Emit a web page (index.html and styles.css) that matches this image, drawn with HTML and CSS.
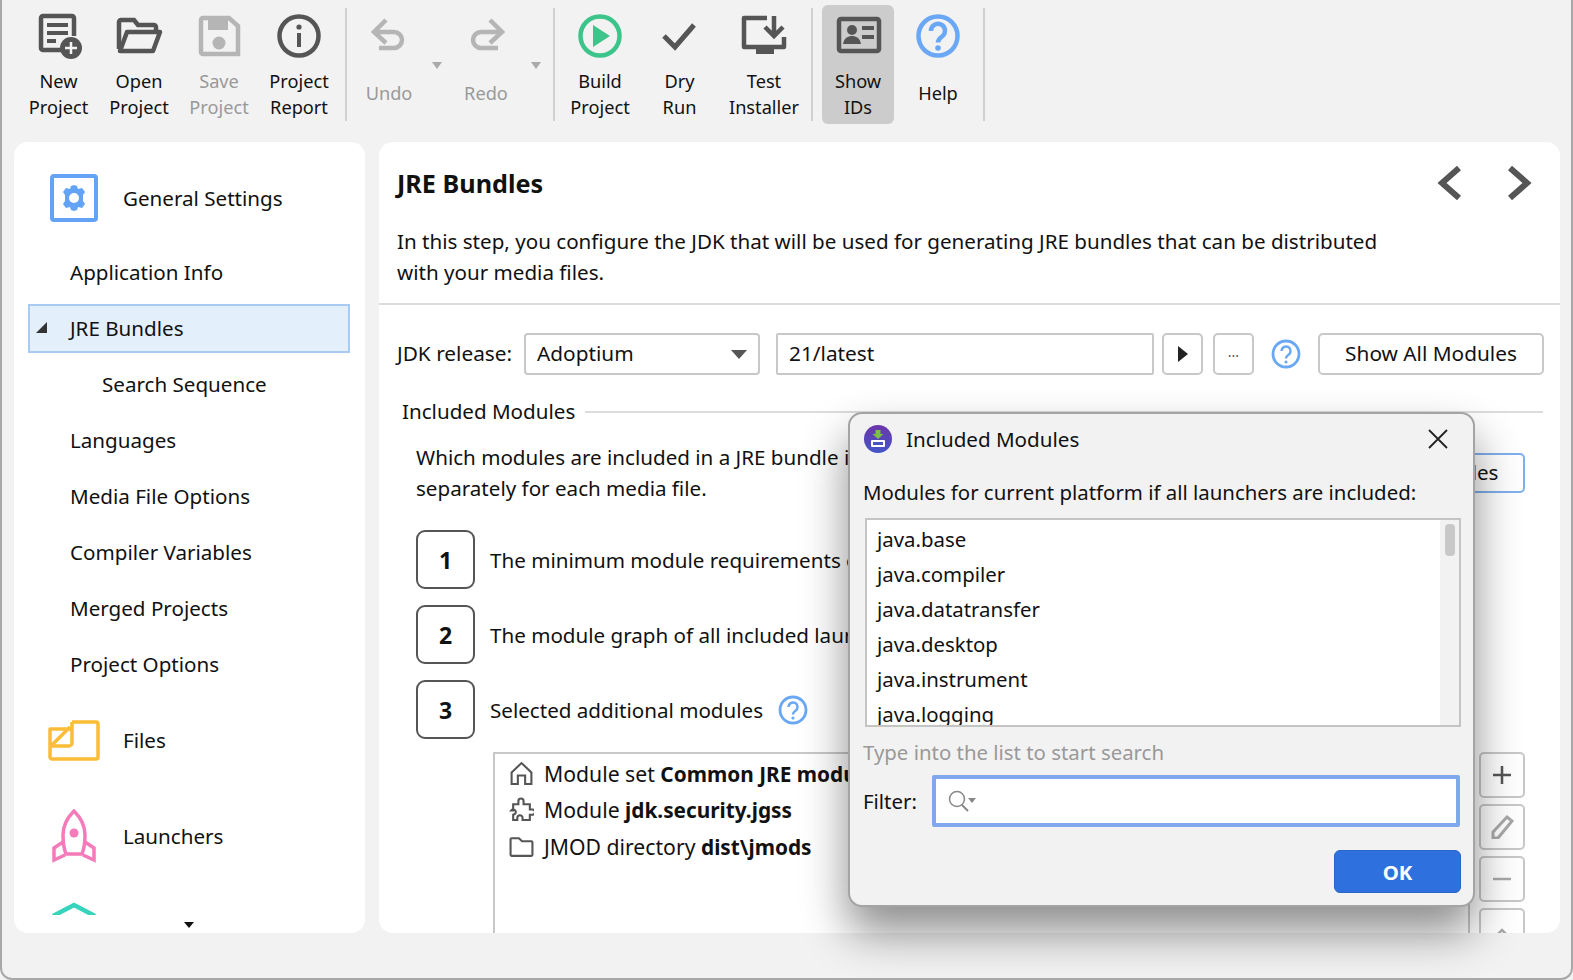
FILE: index.html
```html
<!DOCTYPE html>
<html lang="en">
<head>
<meta charset="utf-8">
<title>JRE Bundles</title>
<link rel="stylesheet" href="styles.css">
</head>
<body>
<div class="window">
  <header class="toolbar">
    <div class="tool w81"><svg class="ico" viewBox="0 0 48 48"><path d="M26 38H8a2 2 0 0 1-2-2V6a2 2 0 0 1 2-2h29a2 2 0 0 1 2 2v18" fill="none" stroke="#555" stroke-width="4.500"/><path d="M12 11h21v4H12zM12 19h21v4H12zM12 27h9v4h-9z" fill="#555"/><circle cx="36" cy="36" r="11" fill="#555"/><path d="M36 30v12M30 36h12" stroke="#f2f2f2" stroke-width="2.500"/></svg><div class="lbl">New<br>Project</div></div>
    <div class="tool w80"><svg class="ico" viewBox="0 0 48 48"><path d="M4 37V10a2 2 0 0 1 2-2h13l4 5h16a2 2 0 0 1 2 2v4" fill="none" stroke="#555" stroke-width="4.500"/><path d="M12 20h33l-7 19H5z" fill="none" stroke="#555" stroke-width="4.500" stroke-linejoin="round"/></svg><div class="lbl">Open<br>Project</div></div>
    <div class="tool w80 off"><svg class="ico" viewBox="0 0 48 48"><path d="M8 6h26l9 8v28H8a2 2 0 0 1-2-2V8a2 2 0 0 1 2-2z" fill="none" stroke="#b5b5b5" stroke-width="4.500"/><path d="M13 8h20v10H13z" fill="#b5b5b5"/><circle cx="24" cy="31" r="6.500" fill="#b5b5b5"/></svg><div class="lbl">Save<br>Project</div></div>
    <div class="tool w80"><svg class="ico" viewBox="0 0 48 48"><circle cx="24" cy="24" r="19.500" fill="none" stroke="#555" stroke-width="4.500"/><path d="M22 21h4v14h-4z" fill="#555"/><circle cx="24" cy="15" r="2.600" fill="#555"/></svg><div class="lbl">Project<br>Report</div></div>
    <div class="sep s-a"></div>
    <div class="tool w82 off"><svg class="ico" viewBox="0 0 48 48"><path d="M11 20h18a8 8 0 0 1 0 16H14" fill="none" stroke="#b5b5b5" stroke-width="4.500"/><path d="M21 8 9 20l12 11" fill="none" stroke="#b5b5b5" stroke-width="4.500"/></svg><div class="lbl lbl-one">Undo</div></div>
    <div class="drop drop-a"></div>
    <div class="tool w84 off"><svg class="ico" viewBox="0 0 48 48"><path d="M39 20H19a8 8 0 0 0 0 16h17" fill="none" stroke="#b5b5b5" stroke-width="4.500"/><path d="M28 8l12 12-12 11" fill="none" stroke="#b5b5b5" stroke-width="4.500"/></svg><div class="lbl lbl-one">Redo</div></div>
    <div class="drop drop-b"></div>
    <div class="sep s-b"></div>
    <div class="tool w80"><svg class="ico" viewBox="0 0 48 48"><circle cx="24" cy="24" r="19.500" fill="none" stroke="#3cc48a" stroke-width="4.500"/><path d="M17 13l17 11-17 11z" fill="#3cc48a"/></svg><div class="lbl">Build<br>Project</div></div>
    <div class="tool w79"><svg class="ico" viewBox="0 0 48 48"><path d="M8 24l11 11L38 13" fill="none" stroke="#555" stroke-width="5"/></svg><div class="lbl">Dry<br>Run</div></div>
    <div class="tool w90"><svg class="ico" viewBox="0 0 48 48"><path d="M27 6H4v29h40V25" fill="none" stroke="#555" stroke-width="4.500" stroke-linejoin="round"/><path d="M16 36h18v6H16z" fill="#555"/><path d="M34 4v20M25 15l9 9 9-9" fill="none" stroke="#555" stroke-width="4.500"/></svg><div class="lbl">Test<br>Installer</div></div>
    <div class="sep s-c"></div>
    <div class="tool w72 active"><svg class="ico" viewBox="0 0 48 48"><rect x="5" y="7" width="40" height="32" rx="2" fill="none" stroke="#555" stroke-width="4.500"/><circle cx="18" cy="18" r="5" fill="#555"/><path d="M9 32c1-6 5-8 9-8s8 2 9 8z" fill="#555"/><path d="M28 14h12v4H28zM28 23h12v4H28z" fill="#555"/></svg><div class="lbl">Show<br>IDs</div></div>
    <div class="tool w88"><svg class="ico" viewBox="0 0 48 48"><circle cx="24" cy="24" r="19.500" fill="none" stroke="#6aa8f5" stroke-width="4.500"/><path d="M17 19a7 7 0 1 1 11 5.500c-2.500 1.800-4 3-4 6" fill="none" stroke="#6aa8f5" stroke-width="4.500"/><circle cx="24" cy="36" r="2.800" fill="#6aa8f5"/></svg><div class="lbl lbl-one">Help</div></div>
    <div class="sep s-d"></div>
  </header>

  <div class="content">
    <aside class="sidebar">
      <nav class="side-nav">
        <div class="head head-first"><svg class="sec-ico" viewBox="0 0 48 48"><rect x="2" y="2" width="44" height="44" rx="2" fill="none" stroke="#62a3f5" stroke-width="4"/><path d="M24 11l3 1 1 3 4-1 3 4-2 3v6l2 3-3 4-4-1-1 3-3 1-3-1-1-3-4 1-3-4 2-3v-6l-2-3 3-4 4 1 1-3z" fill="#62a3f5"/><circle cx="24" cy="24" r="5" fill="#fff"/></svg><span>General Settings</span></div>
        <div class="row">Application Info</div>
        <div class="row selected"><div class="sel-box"><span class="expander"></span>JRE Bundles</div></div>
        <div class="row sub">Search Sequence</div>
        <div class="row">Languages</div>
        <div class="row">Media File Options</div>
        <div class="row">Compiler Variables</div>
        <div class="row">Merged Projects</div>
        <div class="row">Project Options</div>
        <div class="head head-files"><svg class="sec-ico files-ico" viewBox="0 0 52 41"><path d="M24 2h24a2 2 0 0 1 2 2v33a2 2 0 0 1-2 2H4a2 2 0 0 1-2-2V9h22M24 2v21a3 3 0 0 1-3 3H2M3 26 22 7" fill="none" stroke="#fbbd35" stroke-width="3.500" stroke-linejoin="round"/></svg><span>Files</span></div>
        <div class="head head-next"><svg class="sec-ico rocket-ico" viewBox="0 0 48 54"><path d="M24 2c8 8 11 16 11 24 0 7-1 14-3 19H16c-2-5-3-12-3-19 0-8 3-16 11-24z" fill="none" stroke="#f47ab9" stroke-width="3.500"/><circle cx="24" cy="24" r="4.500" fill="#f47ab9"/><path d="M13 33 4 39v12l11-5M35 33l9 6v12l-11-5" fill="none" stroke="#f47ab9" stroke-width="3.500"/></svg><span>Launchers</span></div>
        <div class="head head-last"><svg class="sec-ico" viewBox="0 0 48 48"><path d="M3 15 24 4l21 11" fill="none" stroke="#36d3bd" stroke-width="4.500"/></svg></div>
      </nav>
      <div class="side-more"><span class="more-arrow"></span></div>
    </aside>

    <main class="panel">
      <div class="panel-head">
        <div class="title-row">
          <h1 class="title">JRE Bundles</h1>
          <div class="nav-arrows">
            <svg class="nav-ico" viewBox="0 0 28 36"><path d="M23 3 6 18l17 15" fill="none" stroke="#555" stroke-width="6"/></svg>
            <svg class="nav-ico" viewBox="0 0 28 36"><path d="M6 3l17 15L6 33" fill="none" stroke="#555" stroke-width="6"/></svg>
          </div>
        </div>
        <p class="desc">In this step, you configure the JDK that will be used for generating JRE bundles that can be distributed with your media files.</p>
      </div>
      <div class="panel-body">
        <div class="jdk-row">
          <span class="jdk-label">JDK release:</span>
          <div class="combo"><span>Adoptium</span><span class="combo-arrow"></span></div>
          <div class="field">21/latest</div>
          <div class="sq sq-play"><span class="play"></span></div>
          <div class="sq sq-dots">...</div>
          <svg class="help" viewBox="0 0 30 30"><circle cx="15" cy="15" r="13" fill="none" stroke="#6aa8f5" stroke-width="2.800"/><path d="M10.500 12a4.500 4.500 0 1 1 7 3.700c-1.500 1-2.500 1.800-2.500 3.800" fill="none" stroke="#6aa8f5" stroke-width="2.500"/><circle cx="15" cy="23" r="1.600" fill="#6aa8f5"/></svg>
          <div class="btn btn-all">Show All Modules</div>
        </div>
        <div class="legend"><span>Included Modules</span><i class="legend-line"></i></div>
        <div class="group">
          <div class="intro">
            <p class="intro-text">Which modules are included in a JRE bundle is determined separately for each media file.</p>
            <div class="btn btn-inc">Show Included Modules</div>
          </div>
          <div class="step"><div class="num">1</div><span>The minimum module requirements of the JRE</span></div>
          <div class="step"><div class="num">2</div><span>The module graph of all included launchers</span></div>
          <div class="step"><div class="num">3</div><span>Selected additional modules</span><svg class="help help-step" viewBox="0 0 30 30"><circle cx="15" cy="15" r="13" fill="none" stroke="#6aa8f5" stroke-width="2.800"/><path d="M10.500 12a4.500 4.500 0 1 1 7 3.700c-1.500 1-2.500 1.800-2.500 3.800" fill="none" stroke="#6aa8f5" stroke-width="2.500"/><circle cx="15" cy="23" r="1.600" fill="#6aa8f5"/></svg></div>
          <div class="mods">
            <div class="mod-list">
              <div class="mod"><svg class="mod-ico" viewBox="0 0 24 24"><path d="M2.500 11 12 2l9.500 9v11h-6v-8h-7v8h-6z" fill="none" stroke="#555" stroke-width="2"/></svg><span>Module set <b>Common JRE modules</b></span></div>
              <div class="mod"><svg class="mod-ico" viewBox="0 0 24 24"><path d="M4 7h5V4a2.500 2.500 0 0 1 5 0v3h6v5h2.500a2.500 2.500 0 0 1 0 5H20v5h-7v-2a2.500 2.500 0 0 0-5 0v2H4v-5l2-1a2 2 0 0 0-4-3h2z" fill="none" stroke="#555" stroke-width="2"/></svg><span>Module <b>jdk.security.jgss</b></span></div>
              <div class="mod"><svg class="mod-ico" viewBox="0 0 24 24"><path d="M1.500 20V5a1 1 0 0 1 1-1h7l3 3h9a1 1 0 0 1 1 1v12a1 1 0 0 1-1 1h-19a1 1 0 0 1-1-1z" fill="none" stroke="#555" stroke-width="2"/></svg><span>JMOD directory <b>dist\jmods</b></span></div>
            </div>
            <div class="mod-btns">
              <div class="side-btn"><svg class="side-ico" viewBox="0 0 24 24"><path d="M12 3v18M3 12h18" stroke="#555" stroke-width="2.500"/></svg></div>
              <div class="side-btn"><svg class="side-ico" viewBox="0 0 24 24"><path d="M3 23v-6L17 2l5 4L8 23z" fill="none" stroke="#a9a9a9" stroke-width="3"/></svg></div>
              <div class="side-btn"><svg class="side-ico" viewBox="0 0 24 24"><path d="M3 12h18" stroke="#a9a9a9" stroke-width="2.500"/></svg></div>
              <div class="side-btn"><svg class="side-ico" viewBox="0 0 24 24"><path d="M7 16l5-5 5 5" fill="none" stroke="#a9a9a9" stroke-width="2.500"/></svg></div>
            </div>
          </div>
        </div>
      </div>
    </main>
  </div>

  <section class="dialog">
    <div class="dlg-title">
      <svg class="dlg-logo" viewBox="0 0 28 28"><defs><linearGradient id="lg" x1="0" y1="0" x2="0" y2="1"><stop offset="0" stop-color="#6d35a8"/><stop offset="1" stop-color="#4256c9"/></linearGradient></defs><circle cx="14" cy="14" r="14" fill="url(#lg)"/><path d="M11.500 5h5v4h3l-5.500 5-5.500-5h3z" fill="#7ac143"/><rect x="7" y="15" width="14" height="7" rx="1" fill="#fff"/><rect x="9" y="17" width="10" height="3" fill="#4a53c0"/></svg>
      <span class="dlg-name">Included Modules</span>
      <svg class="dlg-close" viewBox="0 0 20 20"><path d="M1 1l18 18M19 1 1 19" stroke="#222" stroke-width="1.800"/></svg>
    </div>
    <div class="dlg-label">Modules for current platform if all launchers are included:</div>
    <div class="dlg-list">
      <div class="dlg-items">
        <div class="dlg-item">java.base</div>
        <div class="dlg-item">java.compiler</div>
        <div class="dlg-item">java.datatransfer</div>
        <div class="dlg-item">java.desktop</div>
        <div class="dlg-item">java.instrument</div>
        <div class="dlg-item">java.logging</div>
      </div>
      <div class="scroll"><div class="thumb"></div></div>
    </div>
    <div class="dlg-hint">Type into the list to start search</div>
    <div class="filter-row">
      <span class="filter-label">Filter:</span>
      <div class="filter-input"><svg class="search" viewBox="0 0 30 26"><circle cx="10" cy="11" r="7.500" fill="none" stroke="#888" stroke-width="1.500"/><path d="M15 17l6 6" stroke="#888" stroke-width="2"/><path d="M21 10h8l-4 5z" fill="#888"/></svg></div>
    </div>
    <div class="dlg-foot"><div class="ok">OK</div></div>
  </section>
</div>
</body>
</html>
```
FILE: styles.css
```css
* { box-sizing: border-box; }
html, body { margin: 0; height: 100%; overflow: hidden; }
body { background: #f2f2f2; font-family: "Noto Sans", "Open Sans", sans-serif; color: #111; font-size: 20.600px; }
p, h1 { margin: 0; }

.window { position: relative; height: 980px; width: 1573px; background: #f2f2f2; border: 2px solid #a8a8a8; border-top: 0; border-radius: 0 0 12px 12px; overflow: hidden; }

.toolbar { display: flex; height: 142px; padding: 5px 0 0 16px; align-items: flex-start; }
.tool { display: flex; flex-direction: column; align-items: center; height: 119px; padding-top: 7px; border-radius: 6px; font-size: 18.200px; }
.ico { width: 48px; height: 48px; flex: none; }
.lbl { height: 52px; margin-top: 8px; display: flex; flex-direction: column; justify-content: center; text-align: center; line-height: 26px; }
.lbl-one { padding-bottom: 2px; }
.off { color: #999; }
.active { background: #cccccc; }
.w72 { width: 72px; } .w79 { width: 79px; } .w80 { width: 80px; } .w81 { width: 81px; } .w82 { width: 82px; } .w84 { width: 84px; } .w88 { width: 88px; }
.w90 { width: 90px; }
.sep { width: 2px; height: 113px; margin-top: 3px; background: #d0d0d0; flex: none; }
.s-a { margin: 3px 1px 0 6px; }
.s-b { margin: 3px 5px 0 9px; }
.s-c { margin: 3px 9px 0 2px; }
.s-d { margin: 3px 0 0 1px; }
.drop { width: 14px; flex: none; margin-top: 57px; height: 8px; position: relative; }
.drop::after { content: ""; display: block; margin: 0 auto; width: 0; height: 0; border: 5.500px solid transparent; border-top: 7px solid #aaa; border-bottom: 0; }
.drop-b { width: 16px; }

.content { display: flex; gap: 14px; height: 791px; padding: 0 11px 0 12px; }
.sidebar { width: 351px; background: #fff; border-radius: 14px; display: flex; flex-direction: column; flex: none; overflow: hidden; }
.side-nav { flex: 1; overflow: hidden; padding-top: 28px; min-height: 0; }
.side-more { height: 18px; flex: none; display: flex; justify-content: center; padding: 7px 2px 0 0; }
.more-arrow { width: 0; height: 0; border: 5px solid transparent; border-top: 6px solid #111; border-bottom: 0; }
.head { height: 56px; display: flex; align-items: center; padding-left: 36px; gap: 25px; }
.head-first { margin-bottom: 18px; }
.head-files { margin-top: 20px; }
.head-next { margin-top: 40px; }
.head-last { margin-top: 33px; }
.sec-ico { width: 48px; height: 48px; flex: none; }
.files-ico { width: 52px; height: 41px; margin: 0 -2px; }
.rocket-ico { height: 54px; }
.row { height: 56px; display: flex; align-items: center; padding-left: 56px; }
.row.sub { padding-left: 88px; }
.row.selected { padding-left: 14px; padding-right: 15px; }
.sel-box { width: 100%; height: 49px; background: #e4effc; border: 2px solid #a9cbf3; display: flex; align-items: center; padding-left: 40px; position: relative; }
.expander { position: absolute; left: 6px; top: 16px; width: 0; height: 0; border-style: solid; border-width: 0 0 11px 11px; border-color: transparent transparent #333 transparent; }

.panel { flex: 1; background: #fff; border-radius: 14px; overflow: hidden; min-width: 0; }
.panel-head { padding: 24px 17px 14px 18px; border-bottom: 2px solid #dcdcdc; height: 163px; }
.title-row { display: flex; justify-content: space-between; align-items: center; height: 36px; }
.title { font-size: 25.200px; font-weight: 700; line-height: 36px; padding-bottom: 2px; }
.nav-arrows { display: flex; gap: 40px; margin: -2px 11px 0 0; }
.nav-ico { width: 28px; height: 36px; }
.desc { width: 1000px; margin-top: 24px; line-height: 31px; }

.jdk-row { display: flex; align-items: center; height: 42px; margin: 28px 0 0 18px; font-size: 20.800px; }
.jdk-label { width: 127px; flex: none; padding-bottom: 2px; }
.combo { width: 236px; height: 42px; border: 2px solid #c8c8c8; border-radius: 4px; display: flex; align-items: center; justify-content: space-between; padding: 0 10px 3px 11px; flex: none; }
.combo-arrow { width: 0; height: 0; border: 8px solid transparent; border-top: 9px solid #555; border-bottom: 0; margin: 3px 1px 0 0; }
.field { width: 378px; height: 42px; margin-left: 16px; border: 2px solid #c8c8c8; border-radius: 2px; display: flex; align-items: center; padding: 0 0 3px 11px; flex: none; }
.sq { height: 42px; width: 41px; border: 2px solid #c8c8c8; border-radius: 5px; display: flex; align-items: center; justify-content: center; flex: none; }
.sq-play { margin-left: 8px; }
.sq-dots { margin-left: 10px; font-size: 14px; color: #555; padding-bottom: 6px; }
.play { width: 0; height: 0; border: 8px solid transparent; border-left: 10px solid #222; border-right: 0; }
.help { width: 30px; height: 30px; flex: none; margin: 0 17px; }
.btn { border: 2px solid #c8c8c8; border-radius: 5px; display: flex; align-items: center; justify-content: center; white-space: nowrap; flex: none; padding-bottom: 3px; }
.btn-all { width: 226px; height: 42px; }

.legend { display: flex; align-items: center; height: 34px; margin: 20px 17px 0 23px; gap: 10px; }
.legend span { padding-bottom: 3px; }
.legend-line { flex: 1; height: 2px; background: #dcdcdc; }
.group { padding: 0 17px 0 37px; }
.intro { display: flex; justify-content: space-between; height: 71px; padding: 13px 18px 0 0; }
.intro-text { line-height: 31px; width: 620px; }
.btn-inc { width: 260px; height: 40px; margin-top: 11px; border-color: #7fb0ee; padding-right: 24px; }
.step { display: flex; align-items: center; gap: 15px; height: 59px; margin-top: 16px; white-space: nowrap; }
.intro + .step { margin-top: 30px; }
.num { width: 59px; height: 59px; border: 2px solid #555; border-radius: 9px; display: flex; align-items: center; justify-content: center; font-weight: 700; font-size: 23px; flex: none; }
.help-step { margin: 0; }
.mods { display: flex; margin: 13px 0 0 77px; gap: 9px; }
.mod-list { width: 977px; height: 200px; border: 2px solid #c8c8c8; border-bottom: 0; padding: 1px 0 0 14px; flex: none; font-size: 21.200px; }
.mod { display: flex; align-items: center; height: 36.500px; gap: 10px; white-space: nowrap; }
.mod b { font-size: 20.800px; }
.mod-ico { width: 25px; height: 25px; flex: none; }
.mod-btns { display: flex; flex-direction: column; gap: 6px; flex: none; }
.side-btn { width: 46px; height: 46px; border: 2px solid #c8c8c8; border-radius: 5px; display: flex; align-items: center; justify-content: center; flex: none; }
.side-ico { width: 24px; height: 24px; }

.dialog { position: absolute; left: 846px; top: 412px; width: 627px; height: 495px; background: #f2f2f2; border: 2px solid #a4a4a4; border-radius: 14px; box-shadow: 0 25px 45px rgba(0,0,0,.45); padding: 0 13px; font-size: 20.400px; }
.dlg-title { display: flex; align-items: center; height: 49px; margin-bottom: 3px; }
.dlg-logo { width: 28px; height: 28px; flex: none; margin-left: 1px; }
.dlg-name { margin-left: 14px; flex: 1; font-size: 20.600px; }
.dlg-close { width: 20px; height: 20px; margin-right: 12px; }
.dlg-label { margin-top: 13px; line-height: 32px; }
.dlg-list { display: flex; height: 209px; margin: 10px 0 0 2px; width: 596px; border: 2px solid #c4c4c4; background: #fff; overflow: hidden; }
.dlg-items { flex: 1; padding: 2px 0 0 10px; }
.dlg-item { height: 35px; line-height: 35px; }
.scroll { width: 19px; background: #f2f2f2; padding: 4px 4px 0 5px; }
.thumb { width: 10px; height: 32px; background: #c8c8c8; border-radius: 4px; }
.dlg-hint { color: #999; line-height: 30px; margin-top: 10px; }
.filter-row { display: flex; align-items: center; margin-top: 8px; }
.filter-label { width: 69px; flex: none; }
.filter-input { width: 534px; height: 52px; border: 4px solid #7fa9ec; background: #fff; display: flex; align-items: center; padding-left: 11px; border-radius: 2px; }
.search { width: 30px; height: 26px; }
.dlg-foot { display: flex; justify-content: flex-end; margin: 23px -1px 0 0; }
.ok { width: 127px; height: 43px; background: #2e70dd; border: 1px solid #2a64c4; border-radius: 6px; color: #fff; font-weight: 700; display: flex; align-items: center; justify-content: center; }
```
